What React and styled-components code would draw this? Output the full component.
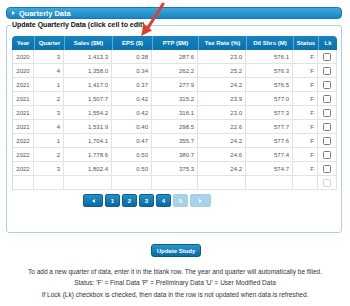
import React from 'react';
import styled, { createGlobalStyle } from 'styled-components';

const Global = createGlobalStyle`
  html, body { margin: 0; padding: 0; background: #fff; }
  body { font-family: "Liberation Sans", Arial, sans-serif; }
`;

const Page = styled.div`
  position: relative;
  width: 350px;
  height: 306px;
  overflow: hidden;
  box-sizing: border-box;
  padding: 7px 8px 0 6px;
`;

const TitleBar = styled.div`
  height: 12px;
  box-sizing: border-box;
  border-radius: 4px;
  border: 1px solid #137cb8;
  background: linear-gradient(#3ea7dd, #1786c4);
  display: flex;
  align-items: center;
  gap: 4px;
  padding-left: 5px;
  color: #fff;
  font-weight: bold;
  font-size: 7.5px;
`;

const Caret = styled.span`
  width: 0;
  height: 0;
  border-top: 2px solid transparent;
  border-bottom: 2px solid transparent;
  border-left: 3px solid #fff;
`;

const Box = styled.fieldset`
  margin: 2px 0 0;
  padding: 7px 4px 25px 5px;
  border: 1px solid #a9d2ea;
  border-radius: 3px;
  min-width: 0;
`;

const Legend = styled.legend`
  font-size: 7px;
  line-height: 8px;
  font-weight: bold;
  color: #111;
  padding: 0 1px;
  margin-left: -1px;
`;

const Table = styled.table`
  border-collapse: separate;
  border-spacing: 0;
  width: 325px;
  table-layout: fixed;
  font-size: 6px;
  color: #555;
`;

const Th = styled.th`
  height: 14px;
  padding: 0;
  background: linear-gradient(#1683bf, #0c71ab);
  color: #fff;
  font-weight: bold;
  font-size: 6px;
  text-align: center;
  white-space: nowrap;
  border-left: 1px solid #5fa9d4;
  &:first-child { border-left: none; border-top-left-radius: 4px; }
  &:last-child { border-top-right-radius: 4px; }
`;

const Td = styled.td`
  height: 13px;
  padding: 0 ${p => (p.$align === 'center' ? 0 : 3)}px;
  text-align: ${p => p.$align || 'right'};
  white-space: nowrap;
  border-right: 1px solid #e3e3e3;
  border-bottom: 1px solid #e3e3e3;
  &:first-child { border-left: 1px solid #d8d8d8; }
`;

const Check = styled.span`
  display: inline-block;
  vertical-align: middle;
  box-sizing: border-box;
  width: 8px;
  height: 8px;
  border: 1px solid ${p => (p.$faded ? '#d2d2d2' : '#7a7a7a')};
  border-radius: 1.5px;
  background: #fff;
`;

const Pager = styled.div`
  display: flex;
  gap: 2px;
  margin: 4px 0 0 71px;
`;

const PageBtn = styled.div`
  width: ${p => p.$w || 15}px;
  height: 13px;
  box-sizing: border-box;
  border-radius: 2px;
  display: flex;
  align-items: center;
  justify-content: center;
  font-size: 6px;
  font-weight: bold;
  color: #fff;
  border: 1px solid ${p => (p.$off ? '#a2d0e8' : '#0b6096')};
  background: ${p => (p.$off ? '#a6d3ea' : 'linear-gradient(#2590c9, #0a69a3)')};
`;

const Tri = styled.span`
  width: 0;
  height: 0;
  border-top: 2px solid transparent;
  border-bottom: 2px solid transparent;
  ${p => (p.$left ? 'border-right: 3px solid #fff;' : 'border-left: 3px solid #fff;')}
`;

const UpdateBtn = styled.div`
  width: 50px;
  height: 13px;
  box-sizing: border-box;
  margin: 11px auto 0;
  border-radius: 3px;
  border: 1px solid #0a5a8c;
  background: linear-gradient(#2a95cd, #0b6ca6);
  color: #fff;
  font-size: 6px;
  font-weight: bold;
  display: flex;
  align-items: center;
  justify-content: center;
  position: relative;
  left: 2px;
`;

const Notes = styled.div`
  margin-top: 9px;
  text-align: center;
  font-size: 6.5px;
  line-height: 11.3px;
  color: #333;
  position: relative;
  left: 1px;
`;

const Arrow = styled.svg`
  position: absolute;
  left: 0;
  top: 0;
  pointer-events: none;
`;

const cols = [22, 30, 48, 40, 46, 48, 47, 25, 19];
const heads = ['Year', 'Quarter', 'Sales ($M)', 'EPS ($)', 'PTP ($M)', 'Tax Rate (%)', 'Dil Shrs (M)', 'Status', 'Lk'];

const rows = [
  ['2020', '3', '1,413.3', '0.38', '287.6', '23.0', '576.1'],
  ['2020', '4', '1,358.0', '0.34', '262.2', '25.2', '576.3'],
  ['2021', '1', '1,417.0', '0.37', '277.9', '24.2', '576.5'],
  ['2021', '2', '1,507.7', '0.42', '315.2', '23.9', '577.0'],
  ['2021', '3', '1,554.2', '0.42', '316.1', '23.0', '577.3'],
  ['2021', '4', '1,531.9', '0.40', '298.5', '22.6', '577.7'],
  ['2022', '1', '1,704.1', '0.47', '355.7', '24.2', '577.6'],
  ['2022', '2', '1,778.6', '0.50', '380.7', '24.6', '577.4'],
  ['2022', '3', '1,802.4', '0.50', '375.3', '24.2', '574.7'],
];

export default function App() {
  return (
    <>
      <Global />
      <Page>
        <TitleBar>
          <Caret />
          Quarterly Data
        </TitleBar>
        <Box>
          <Legend>Update Quarterly Data (click cell to edit)</Legend>
          <Table>
            <colgroup>
              {cols.map((w, i) => <col key={i} style={{ width: w }} />)}
            </colgroup>
            <thead>
              <tr>
                {heads.map(h => <Th key={h}>{h}</Th>)}
              </tr>
            </thead>
            <tbody>
              {rows.map((r, i) => (
                <tr key={i}>
                  <Td $align="center">{r[0]}</Td>
                  {r.slice(1).map((v, j) => <Td key={j}>{v}</Td>)}
                  <Td>F</Td>
                  <Td $align="center"><Check /></Td>
                </tr>
              ))}
              <tr>
                {cols.slice(0, 8).map((_, i) => <Td key={i}>{'\u00a0'}</Td>)}
                <Td $align="center"><Check $faded /></Td>
              </tr>
            </tbody>
          </Table>
          <Pager>
            <PageBtn $w={20}><Tri $left /></PageBtn>
            <PageBtn>1</PageBtn>
            <PageBtn>2</PageBtn>
            <PageBtn>3</PageBtn>
            <PageBtn>4</PageBtn>
            <PageBtn $off>5</PageBtn>
            <PageBtn $off $w={21}><Tri /></PageBtn>
          </Pager>
        </Box>
        <UpdateBtn>Update Study</UpdateBtn>
        <Notes>
          <div>To add a new quarter of data, enter it in the blank row. The year and quarter will automatically be filled.</div>
          <div>Status: 'F' = Final Data  'P' = Preliminary Data  'U' = User Modified Data</div>
          <div>If Lock (Lk) checkbox is checked, then data in the row is not updated when data is refreshed.</div>
        </Notes>
        <Arrow width="350" height="42" viewBox="0 0 350 42">
          <line x1="163" y1="4" x2="147.5" y2="28.5" stroke="#e53a2f" strokeWidth="3" strokeLinecap="round" />
          <polygon points="141,36 152,30.5 144,24" fill="#e53a2f" />
        </Arrow>
      </Page>
    </>
  );
}
